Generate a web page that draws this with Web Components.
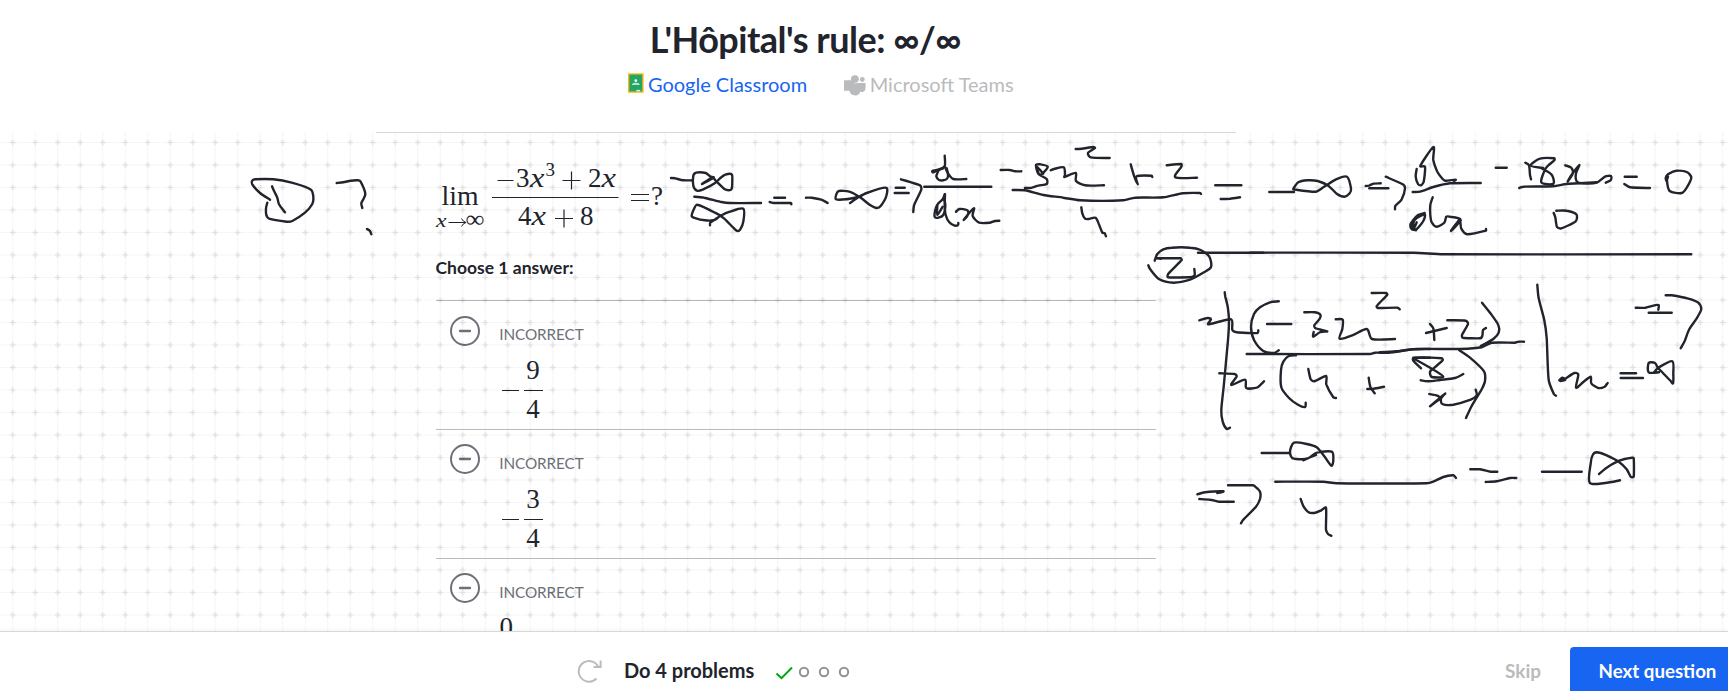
<!DOCTYPE html>
<html lang="en"><head><meta charset="utf-8"><title>L'Hôpital's rule</title>
<style>html,body{margin:0;height:100%;overflow:hidden;background:#fff;font-family:Lato,sans-serif;color:#21242c}</style></head>
<body><exercise-page></exercise-page>
<script>
const define=(name,html,setup)=>customElements.define(name,class extends HTMLElement{
  constructor(){super();this.attachShadow({mode:'open'}).innerHTML=html;}
  connectedCallback(){if(setup)setup(this,this.shadowRoot);}
});

define('exercise-header',`<style>
:host{display:block;height:132px;box-sizing:border-box;padding-top:17px;width:1611px;text-align:center}
h1{margin:0;font-size:36px;line-height:44px;font-weight:700;letter-spacing:-.5px}
nav{display:flex;justify-content:center;margin-top:11px;font-size:20px;line-height:24px;padding-left:32px;width:1578px}
span{display:flex;align-items:center}
.g{color:#1865f2;margin-right:36.500px}.m{color:#babbbd}
.g svg{width:19.500px}
.m svg{width:26px}
svg{display:block}
</style><h1>L'Hôpital's rule: ∞/∞</h1>
<nav><span class="g"><svg width="20" height="24" viewBox="0 0 20 24"><rect y="1" width="16" height="20" fill="#f7b916"/><rect x="1.4" y="2.4" width="13.2" height="17.2" fill="#23a566"/><circle cx="8" cy="8.5" r="1.4" fill="#fff"/><path d="M4 13q0-2 3-2.3h2q3 .3 3 2.3z" fill="#b9e3cd"/><path d="M8.5 18h4v1.6h-4z" fill="#d7efe2"/></svg>Google Classroom</span>
<span class="m"><svg width="27" height="24" viewBox="0 0 27 24"><g fill="#babbbd"><circle cx="11.3" cy="7" r="4.1"/><circle cx="19" cy="7.3" r="2.5"/><rect y="8" width="12" height="11" rx=".6"/><path d="M10 11h12.4v5.5a3.6 3.6 0 0 1-5.4 3.2 5.8 5.8 0 0 1-11.3-.9z"/></g><path d="M11 11.5q2.7-.6 4.3-2.6 .6 1.6 2 1.8" fill="none" stroke="#fff" stroke-width=".7"/></svg>Microsoft Teams</span></nav>`);

define('limit-formula',`<style>
:host{display:block;height:74px}svg{display:block;overflow:visible}
text{font:27px "Liberation Serif",serif;fill:#21242c}.i{font-style:italic}
</style><svg width="230" height="74">
<text x="5.500" y="46" textLength="37" lengthAdjust="spacingAndGlyphs">lim</text>
<text x="0" y="67.500" class="i" style="font-size:19px" textLength="10.500" lengthAdjust="spacingAndGlyphs">x</text>
<path d="M12.500 63.500h17M25.500 59.500q1.500 3.200 4.500 4q-3 .8-4.500 4" fill="none" stroke="#21242c"/>
<text x="29.500" y="68" style="font-size:24px" textLength="19" lengthAdjust="spacingAndGlyphs">∞</text>
<path d="M61.500 21.500h16M56 38.500h126.500M126.500 21.500h18M135.500 12.500v18M119 59.500h18M128 50.500v18" fill="none" stroke="#21242c" stroke-width="1.200"/>
<text x="80" y="27.500">3</text><text class="i" x="94" y="27.500" textLength="14.500" lengthAdjust="spacingAndGlyphs">x</text><text x="109.500" y="17" style="font-size:19px">3</text>
<text x="152" y="27.500">2</text><text class="i" x="165.500" y="27.500" textLength="14.500" lengthAdjust="spacingAndGlyphs">x</text>
<text x="82" y="65.500">4</text><text class="i" x="95.500" y="65.500" textLength="14.500" lengthAdjust="spacingAndGlyphs">x</text><text x="144" y="65.500">8</text>
<path d="M195 35.500h18M195 41.500h18" stroke="#21242c" stroke-width="1.200"/><text x="215" y="46">?</text>
</svg>`);

define('answer-choice',`<style>
:host{display:flex;height:129px;box-sizing:border-box;border-top:1px solid #babbc2;padding-left:14px}
.c{width:50px;padding-top:13px;flex:none}svg{display:block}
:host([first]) .c{padding-top:14px}
.l{font-size:15.300px;line-height:20px;color:#6d7079;margin:23px 0 0 -.2px;letter-spacing:-.1px}
.v{display:flex;align-items:center;height:72px;margin-top:10px;font:27px/38px "Liberation Serif",serif}
</style><div class="c"><svg width="30" height="32"><circle cx="15" cy="16" r="14" fill="none" stroke="#6d7079" stroke-width="2"/><path d="M10 16h10" stroke="#6d7079" stroke-width="2.300" stroke-linecap="round"/></svg></div>
<div><div class="l">INCORRECT</div><div class="v"><slot></slot></div></div>`);

define('signed-fraction',`<style>
:host{display:flex;align-items:center;padding-left:2px;height:74px;color:#21242c}
i{width:17px;height:1px;background:#21242c;margin-right:5px}
b{font-weight:400;display:grid;grid-template-rows:37px 1px 37px;width:19px;text-align:center;line-height:34px;justify-items:center}
u{background:#21242c;width:19px}
::slotted([slot=d]){line-height:36px}
</style><i></i><b><slot name="n"></slot><u></u><slot name="d"></slot></b>`);

define('scratch-pad',`<style>:host{position:absolute;inset:0;pointer-events:none}svg{display:block;overflow:hidden}</style>
<svg width="1728" height="499" viewBox="0 132 1728 499"><defs><pattern id="g" width="22.500" height="22.500" patternUnits="userSpaceOnUse" x="1.500" y="131.200">
<path d="M0 11.250h22.500M11.250 0v22.500" stroke="#000" stroke-opacity=".075" stroke-dasharray="1 1.200"/>
<path d="M8.500 11.250h5.500M11.250 8.500v5.500" stroke="#000" stroke-opacity=".09" stroke-width="1.700"/></pattern></defs>
<rect y="132" width="1728" height="499" fill="url(#g)"/>
<g id="ink" fill="none" stroke="#21242c" stroke-width="2.400" stroke-linecap="round" stroke-linejoin="round"></g></svg>`,(el,root)=>{
 const sheets=[
 [230,125,`120,224 90,204 68,180 66,168 76,163 130,163 185,173 243,194 250,215 247,237 225,263 187,288 170,290 117,281 109,270 108,250 112,233
126,184 134,202 142,218 147,238 165,262 160,256
320,174 340,172 362,167 384,166 392,170 406,207 394,235 397,249
411,312 420,318 424,328`],
 [660,135,`33,129 46,130 70,136 97,136
126,147 161,128 150,124 137,114 108,113 100,122 100,152 111,167 128,164 164,145 180,130 196,119 215,118 217,138 215,161 206,166 192,161 166,136 157,127 126,147
103,185 132,188 180,200 210,204 303,204
150,271 151,263 170,250 182,242 210,230 250,221 250,260 241,283 232,288 220,278 192,250 165,233 112,209 103,220 95,243 108,250 135,256 160,256 172,250
343,188 375,188
329,201 342,204 393,204 394,208
438,188 455,188 484,194 503,204
570,204 595,187 620,174 678,158 679,183 662,213 650,219 630,210 600,187 568,170 536,168 529,178 528,193 558,193 600,185
707,158 734,158
704,174 746,174
723,133 780,151 784,164 762,211 760,231
793,155 994,155
854,62 854,94 835,104 817,108 819,112 835,104 832,115 829,124 836,134 850,136 862,130 864,118 860,100
818,111 848,101
854,94 864,115 880,132 919,132
854,178 848,193 834,206 827,220 824,246 835,248 850,240 856,215 853,190
832,212 832,240 848,215
855,178 854,212 857,240 868,262 884,272 894,270 895,264
888,230 898,222 917,224 925,230 922,243 911,255 920,243 942,220 938,243 958,263 990,263 1005,258 1018,257`],
 [990,135,`32,105 60,105 75,109 94,109
105,159 125,158 145,152 170,147 170,132 145,116 138,90 150,88 173,95 158,115 149,119 144,111 141,96 160,116
182,106 192,102 221,97 225,120 223,126 257,114 258,138 285,151 342,151
257,42 275,41 311,36 315,39 294,54 302,67 359,69
422,88 433,125 443,148 440,124 485,122 487,126
530,91 574,87 574,95 556,127 621,128
68,165 105,166 160,180 220,188 270,196 400,196 435,188 520,187 578,175 630,174 633,177
676,151 754,151
692,192 720,191 750,187
274,217 277,235 285,251 296,252 316,248 326,266 337,293 344,295 348,304
494,377 502,357 520,343 545,338 600,338 632,345 658,365 663,396 640,413 600,434 551,443 508,433 480,402 475,391
513,371 500,370 572,370 575,375 535,416 534,427 605,426 614,420 613,402
624,353 820,353`],
 [1250,135,`0,353 490,353 580,358 1324,358
58,171 132,171
130,161 145,142 172,136 203,138 235,152 260,176 283,185 299,175 303,160 291,125 258,133 220,157 197,170 130,163
347,153 357,152 370,146 392,145
358,160 415,160
407,125 458,148 465,160 455,193 436,213 435,223
500,102 497,125 504,147 512,151 521,140 525,95 511,93 550,36 550,75 562,110 576,130 585,137 617,134 612,138
488,171 510,170 550,156 600,145 692,144
548,187 541,210 541,240 545,262 560,275 583,263 589,245 600,245 627,250 632,257 603,288 621,263 630,255 634,281 652,298 708,287 708,282
524,234 504,240 488,257 481,270 485,282 498,284 520,258 524,238 497,252 486,274 498,286
490,262 492,280 500,262
737,98 770,98
826,83 837,91 840,120 843,133
880,99 842,92 870,71 913,70 913,76 888,99 874,142 910,146 905,119 874,100
946,91 964,98 968,116 953,140 963,122 988,90 978,115 980,139 999,145 1040,143 1065,125 1083,123 1082,136 1067,143
808,159 820,155 910,154 950,147 1040,142
1124,125 1160,125
1123,147 1140,157 1200,159
1254,125 1251,137 1259,168 1295,174 1310,158 1324,128 1310,111 1278,107 1254,118 1247,128 1249,137
911,234 916,247 921,276 934,280 977,259 979,238 950,227 919,227`],
 [1140,240,`254,157 256,170 263,200 267,245 264,300 251,440 244,510 248,545 260,567 270,563
178,241 202,234 213,238 205,253 273,238 277,269 290,277 353,279 355,271
416,184 390,187 360,202 342,222 333,260 342,300 370,333 402,339 416,331
381,252 454,252
493,217 525,217 541,224 538,238 523,256 527,265 562,274 541,276 520,290 521,276
587,238 608,239 607,267 599,296 637,286 680,267 696,297 765,297
695,159 738,159 742,164 710,198 713,204 773,203 779,208
320,342 690,342 705,338 745,338 820,328 870,327
238,400 284,402 290,409 274,435 315,419 319,444 350,443 363,433 372,424
468,346 446,348 430,365 423,390 424,442 447,474 474,494 495,501 497,488
505,387 512,418 523,424 558,408 559,433 580,472 588,474
686,413 691,440 704,460
682,447 700,446 732,440
820,353 870,353`],
 [1380,270,`138,189 200,174
150,162 160,175 163,210
202,151 257,152 264,162 246,195 248,203 300,205 307,198 309,180 318,174
306,98 330,128 355,165 356,188 340,207 302,228
0,247 50,244 108,237 240,237 305,232 335,218 405,218 415,215 432,215
238,241 270,263 312,304 315,333 305,358 275,408 258,444
123,295 100,265 185,265 188,271 160,296 150,305 155,321 190,320 155,296 100,265
122,331 145,334 180,330 225,324 250,312
148,372 172,377 180,385 150,409 195,371 183,386 187,402 220,404 272,389 290,376 287,359
472,44 476,85 493,151 500,205 506,330 522,373 528,377
767,113 796,113 824,106 836,105 835,119
806,128 875,128
857,76 875,76 925,86 955,98 964,117 950,145 927,179 914,213 902,235
538,331 547,323 556,329 541,333 556,326 583,309 595,313 588,353 610,336 632,320 634,340 655,354 674,350 683,339
722,310 768,310
722,324 789,324
821,308 837,292 877,274 880,311 879,340 872,333 840,300 833,293 825,279 806,279 806,307 837,307
271,598 300,598 332,605 352,605
317,636 350,634 390,624 409,624
486,605 605,605
657,612 680,593 718,572 755,563 761,565 761,620 752,620 740,598 716,575 680,556 650,547 638,555 632,580 629,638 675,639 720,631`],
 [1170,420,`275,99 360,99
400,121 420,112 440,98 485,95 490,120 484,137 463,109 440,82 410,72 372,68 360,95 368,115 405,117 438,105
316,185 460,185 500,190 770,190 790,185 820,171 850,166 858,174
392,237 401,260 416,277 436,278 454,271 468,263 468,329 474,342 484,347
174,196 248,196 256,200 270,215 270,237 258,260 219,300 213,310
82,223 105,217 160,214 142,219
88,237 120,239 147,245 191,245`]];
 const f=n=>n.toFixed(1);
 root.querySelector('#ink').innerHTML=sheets.flatMap(([ox,oy,lines])=>lines.split('\n').map(line=>{
  const p=line.split(' ').map(s=>{const [x,y]=s.split(',').map(Number);return [ox+x/3,oy+y/3]});
  let d='M'+p[0].map(f);
  for(let i=0;i<p.length-1;i++){
   const a=p[i-1]||p[i],b=p[i],c=p[i+1],e=p[i+2]||c,L=Math.hypot(c[0]-b[0],c[1]-b[1]);
   const h=(u,v)=>{const x=v[0]-u[0],y=v[1]-u[1],m=Math.hypot(x,y)||1,k=Math.min(L*.28,m/7);return [x/m*k,y/m*k]};
   const s=h(a,c),t=h(b,e);
   d+='C'+[b[0]+s[0],b[1]+s[1],c[0]-t[0],c[1]-t[1],c[0],c[1]].map(f);
  }
  return `<path d="${d}"/>`})).join('');
});

define('exercise-footer',`<style>
:host{display:flex;height:60px;box-sizing:border-box;border-top:1px solid #d6d8da;background:#fff;position:relative;box-shadow:0 -1px 4px rgba(0,0,0,.05);padding:19px 0 0 576px;font-weight:700;overflow:hidden;align-items:flex-start}
svg{display:block;flex:none}.p{width:151px;margin-left:22px;line-height:38px;font-size:20px;letter-spacing:-.02px;white-space:nowrap;height:38px}
.s{color:#babbbd;margin:1px 29px 0 auto;line-height:38px;font-size:19px}
button{border:0;background:#1865f2;color:#fff;font:700 18.700px Lato,sans-serif;width:174px;height:50px;border-radius:4px 4px 0 0;margin-right:-16px;padding:0 0 3px 1px;margin-top:-4px;flex:none}
</style><svg width="26" height="40"><path d="M20.500 26.500A10.300 10.300 0 1 1 22.600 15.500M24.600 8.500v6.500h-7" transform="translate(0 1)" fill="none" stroke="#babbbd" stroke-width="2"/></svg>
<div class="p">Do 4 problems</div>
<svg width="76" height="40"><path d="M1.500 22.500l5 4.700L17 16.500" fill="none" stroke="#00a60e" stroke-width="2"/><g fill="none" stroke="#909297" stroke-width="2"><circle cx="29" cy="21" r="4.200"/><circle cx="49" cy="21" r="4.200"/><circle cx="69" cy="21" r="4.200"/></g></svg>
<div class="s">Skip</div><button>Next question</button>`);

define('exercise-page',`<style>
:host{display:flex;flex-direction:column;height:691px}
main{height:499px;position:relative;overflow:hidden}
.rule{width:860px;height:1px;background:#d6d8da;margin-left:376px}
section{width:720px;margin-left:435.500px;padding-top:26px}
p{margin:23px 0 0;height:44px;font-size:17.500px;line-height:24px;font-weight:700}
</style><exercise-header></exercise-header><main><div class="rule"></div><section>
<limit-formula></limit-formula><p>Choose 1 answer:</p>
<answer-choice first><signed-fraction><span slot="n">9</span><span slot="d">4</span></signed-fraction></answer-choice>
<answer-choice><signed-fraction><span slot="n">3</span><span slot="d">4</span></signed-fraction></answer-choice>
<answer-choice><span style="margin-top:-42px">0</span></answer-choice>
</section><scratch-pad></scratch-pad></main><exercise-footer></exercise-footer>`);
</script></body></html>
